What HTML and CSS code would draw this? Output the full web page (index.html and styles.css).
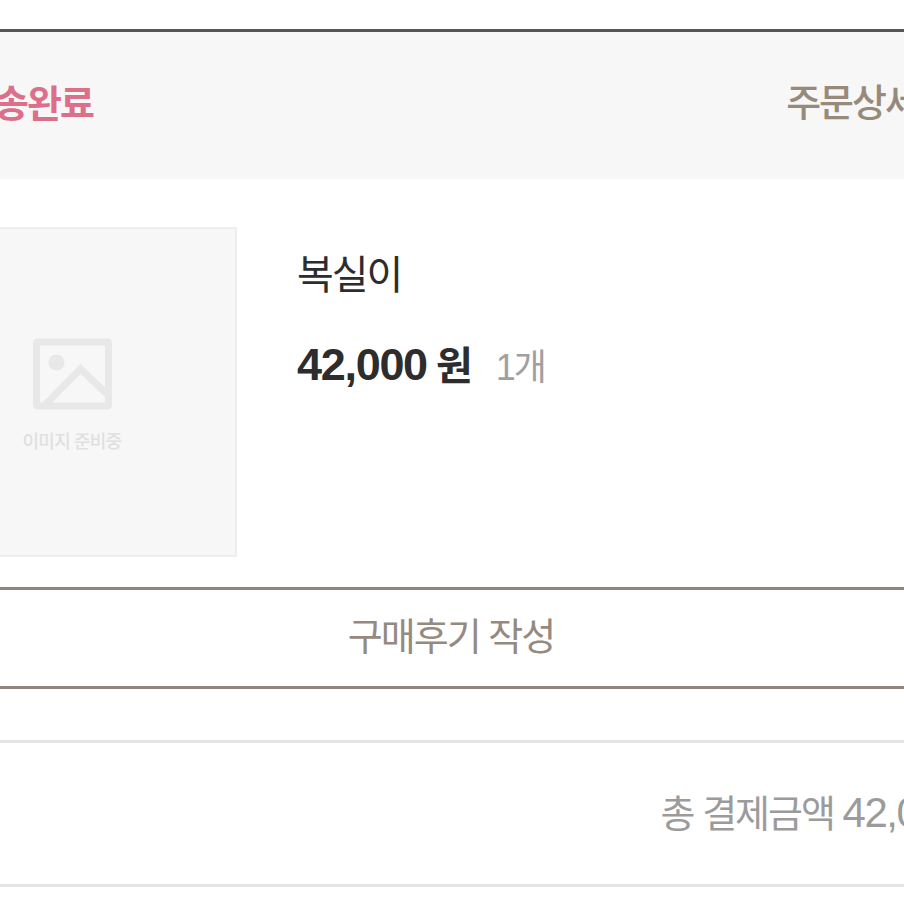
FILE: index.html
```html
<!DOCTYPE html>
<html lang="ko">

<head>
    <meta charset="utf-8">
    <title>주문내역</title>
    <link rel="stylesheet" href="styles.css">
</head>

<body>
    <section class="order">
        <header class="order-head">
            <strong class="status">배송완료</strong>
            <a class="detail-link">주문상세</a>
        </header>

        <div class="product">
            <div class="thumb">
                <svg class="thumb-icon" width="80" height="72" viewBox="0 0 80 72">
                    <rect x="3.5" y="4" width="72" height="64" rx="1" fill="none" stroke="#e8e8e8" stroke-width="7" />
                    <circle cx="23.500" cy="24.500" r="8" fill="#e8e8e8" />
                    <path d="M12 67 L47.500 31 L75 57" fill="none" stroke="#e8e8e8" stroke-width="7" />
                </svg>
                <span class="thumb-text">이미지 준비중</span>
            </div>
            <div class="info">
                <p class="name">복실이</p>
                <p class="price"><strong><span class="num">42,000</span> 원</strong><span class="count">1개</span></p>
            </div>
        </div>

        <button class="review-btn">구매후기 작성</button>

        <footer class="total"><span>총 결제금액 <span class="num">42,000</span></span></footer>
    </section>
</body>

</html>
```

FILE: styles.css
```css
* {
    box-sizing: border-box;
}

body {
    margin: 0;
    background: #fff;
    overflow: hidden;
    font-family: "Liberation Sans", "Noto Sans CJK KR", sans-serif;
}

p {
    margin: 0;
}

.order {
    margin-top: 29px;
    border-top: 3px solid #5a5555;
    overflow: hidden;
}

.order-head {
    display: flex;
    justify-content: space-between;
    height: 147px;
    padding-top: 44px;
    background: #f7f7f7;
    font-size: 38px;
    line-height: 54px;
    letter-spacing: -2px;
    white-space: nowrap;
}

.status {
    margin-left: -39px;
    padding-top: 1px;
    color: #dc6f8a;
}

.detail-link {
    margin-right: -14px;
    color: #988a7a;
    font-weight: 500;
}

/* product row */
.product {
    display: flex;
    height: 408px;
    padding-top: 48px;
}

.thumb {
    display: flex;
    flex-direction: column;
    align-items: center;
    width: 329px;
    height: 330px;
    margin-left: -92px;
    padding-top: 109px;
    border: 2px solid #eee;
    background: #f7f7f7;
}

.thumb-text {
    margin: 19px 1px 0 0;
    color: #e0e0e0;
    font-size: 18px;
    font-weight: 500;
    line-height: 26px;
    letter-spacing: -.8px;
}

.info {
    padding: 18px 0 0 60px;
    white-space: nowrap;
}

.name {
    color: #2d2d2d;
    font-size: 40px;
    line-height: 60px;
    letter-spacing: -2px;
}

.price {
    margin-top: 30px;
    color: #2d2d2d;
    font-size: 40px;
    line-height: 60px;
    letter-spacing: -2px;
}

.price .num {
    font-size: 45px;
    letter-spacing: -1.3px;
}

.count {
    margin-left: 25px;
    color: #a0a0a0;
    font-size: 36px;
}

.review-btn {
    display: block;
    width: 100%;
    height: 102px;
    padding: 0 2px 10px 0;
    border: solid #8f877f;
    border-width: 3px 0;
    background: #fff;
    color: #958a7f;
    font: inherit;
    font-size: 38px;
    letter-spacing: -2px;
}

/* total amount */
.total {
    display: flex;
    justify-content: flex-end;
    height: 147px;
    margin-top: 51px;
    padding-top: 43px;
    border: solid #e5e5e5;
    border-width: 3px 0;
    color: #9b9b9b;
    font-size: 38px;
    line-height: 54px;
    letter-spacing: -2px;
    white-space: nowrap;
}

.total > span {
    margin-right: -58px;
}

.total .num {
    font-size: 42px;
    letter-spacing: -1.5px;
}
```
